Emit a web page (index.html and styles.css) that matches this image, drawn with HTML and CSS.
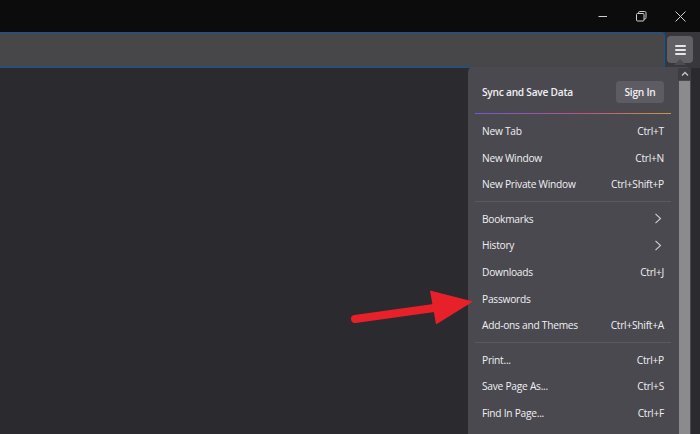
FILE: index.html
```html
<!DOCTYPE html>
<html lang="en">
<head>
<meta charset="utf-8">
<link rel="stylesheet" href="styles.css">
</head>
<body>
<div class="app">
  <div class="titlebar">
    <div class="winbtn">
      <svg width="10" height="10" viewBox="0 0 10 10"><path d="M0.5 5.5H9" stroke="#cfcfcf" stroke-width="1"/></svg>
    </div>
    <div class="winbtn">
      <svg width="11" height="11" viewBox="0 0 11 11"><rect x="0.5" y="2.5" width="7.5" height="7.5" rx="1" fill="none" stroke="#cfcfcf"/><path d="M2.5 2.5V1.8Q2.5 0.5 3.8 0.5H8.7Q10 0.5 10 1.8V6.7Q10 8 8.7 8H8" fill="none" stroke="#cfcfcf"/></svg>
    </div>
    <div class="winbtn">
      <svg width="11" height="11" viewBox="0 0 11 11"><path d="M0.5 0.5L10.5 10.5M10.5 0.5L0.5 10.5" stroke="#cfcfcf" stroke-width="1"/></svg>
    </div>
  </div>
  <div class="toolbar">
    <div class="urlbar"></div>
    <div class="menubtn-wrap">
      <div class="menubtn">
        <span class="bar"></span><span class="bar"></span><span class="bar"></span>
        <span class="notch"></span>
      </div>
    </div>
  </div>
  <div class="content"></div>

  <div class="panel">
    <div class="panel-body">
      <div class="panel-header">
        <span class="sync">Sync and Save Data</span>
        <span class="signin">Sign In</span>
      </div>
      <div class="gradient-line"></div>
      <div class="group first">
        <div class="item"><span>New Tab</span><span>Ctrl+T</span></div>
        <div class="item"><span>New Window</span><span>Ctrl+N</span></div>
        <div class="item"><span>New Private Window</span><span>Ctrl+Shift+P</span></div>
      </div>
      <div class="sep"></div>
      <div class="group">
        <div class="item"><span>Bookmarks</span><svg class="chev" width="8" height="11" viewBox="0 0 8 11"><path d="M1.5 0.8L6.5 5.5L1.5 10.2" fill="none" stroke="#cfcfd2" stroke-width="1.1"/></svg></div>
        <div class="item"><span>History</span><svg class="chev" width="8" height="11" viewBox="0 0 8 11"><path d="M1.5 0.8L6.5 5.5L1.5 10.2" fill="none" stroke="#cfcfd2" stroke-width="1.1"/></svg></div>
        <div class="item"><span>Downloads</span><span>Ctrl+J</span></div>
        <div class="item"><span>Passwords</span><span></span></div>
        <div class="item"><span>Add-ons and Themes</span><span>Ctrl+Shift+A</span></div>
      </div>
      <div class="sep"></div>
      <div class="group">
        <div class="item"><span>Print...</span><span>Ctrl+P</span></div>
        <div class="item"><span>Save Page As...</span><span>Ctrl+S</span></div>
        <div class="item"><span>Find In Page...</span><span>Ctrl+F</span></div>
      </div>
    </div>
    <div class="scrollbar">
      <div class="scroll-up">
        <svg width="8" height="6" viewBox="0 0 8 6"><path d="M1 4.5L4 1.5L7 4.5" fill="none" stroke="#c8c8cc" stroke-width="1.3"/></svg>
      </div>
      <div class="thumb"></div>
    </div>
  </div>

  <svg class="arrow" width="700" height="434" viewBox="0 0 700 434">
    <path d="M355 319L434 308" stroke="#e8202a" stroke-width="8" stroke-linecap="round"/>
    <polygon points="430,290.5 436,324.5 473,301.5" fill="#e8202a"/>
  </svg>
</div>
</body>
</html>
```

FILE: styles.css
```css
* { box-sizing: border-box; }
html, body { margin: 0; padding: 0; }
body {
  width: 700px;
  height: 434px;
  overflow: hidden;
  background: #2a2a2f;
  font-family: "Open Sans", "Noto Sans", sans-serif;
  color: #f0f0f3;
}
.app {
  position: relative;
  width: 700px;
  height: 434px;
  display: flex;
  flex-direction: column;
}
.titlebar {
  height: 32px;
  background: #0c0c0d;
  display: flex;
  justify-content: flex-end;
}
.winbtn {
  width: 39px;
  height: 32px;
  display: flex;
  align-items: center;
  justify-content: center;
}
.toolbar {
  height: 36px;
  display: flex;
  background: #38373c;
}
.urlbar {
  flex: 1;
  background: #474749;
  border-top: 1px solid #0f55a0;
  border-right: 1px solid #0f55a0;
  border-bottom: 1px solid #0f55a0;
  border-top-right-radius: 4px;
  height: 36px;
}
.menubtn-wrap {
  width: 35px;
  display: flex;
  align-items: flex-start;
  justify-content: flex-start;
  padding-top: 4px;
  padding-left: 2px;
}
.menubtn {
  position: relative;
  width: 26px;
  height: 27px;
  background: #616165;
  border-radius: 4px;
  display: flex;
  flex-direction: column;
  align-items: center;
  justify-content: center;
  gap: 2px;
}
.notch {
  position: absolute;
  left: 7px;
  bottom: -2px;
  width: 0;
  height: 0;
  border-left: 6px solid transparent;
  border-right: 6px solid transparent;
  border-bottom: 6px solid #4c4b51;
}
.bar {
  width: 11px;
  height: 2px;
  background: #e6e6ea;
  border-radius: 1px;
}
.content {
  flex: 1;
  background: #2a2a2f;
}

.panel {
  position: absolute;
  left: 468px;
  top: 67px;
  width: 223px;
  height: 380px;
  background: #4a494f;
  border-top-left-radius: 5px;
  border-top-right-radius: 5px;
  display: flex;
  font-size: 10.2px;
  letter-spacing: -0.25px;
}
.panel-body {
  width: 210px;
  padding: 7px 7px 0 7px;
}
.panel-header {
  height: 36px;
  display: flex;
  align-items: center;
  justify-content: space-between;
  padding: 0 7px;
}
.sync {
  font-weight: 600;
}
.signin {
  width: 48px;
  height: 22px;
  border-radius: 4px;
  background: #5d5c62;
  font-weight: 600;
  display: flex;
  align-items: center;
  justify-content: center;
}
.gradient-line {
  margin-top: 2.5px;
  height: 1.5px;
  background: linear-gradient(90deg, #6d5ad9, #c24f85 55%, #c8993d);
}
.group.first { margin-top: 3.8px; }
.item {
  height: 26.67px;
  display: flex;
  align-items: center;
  justify-content: space-between;
  padding: 0 7px;
}
.chev { margin-right: 2px; }
.sep {
  height: 1px;
  background: #5b5a60;
  margin: 3.7px 0 3px 0;
}
.scrollbar {
  width: 13px;
  display: flex;
  flex-direction: column;
  padding-top: 1px;
}
.scroll-up {
  height: 12px;
  background: #3d3c41;
  display: flex;
  align-items: center;
  justify-content: center;
}
.thumb {
  flex: 1;
  background: #8b8b8e;
  margin: 1px 1px 0 1px;
}
.arrow {
  position: absolute;
  left: 0;
  top: 0;
  pointer-events: none;
}
```
